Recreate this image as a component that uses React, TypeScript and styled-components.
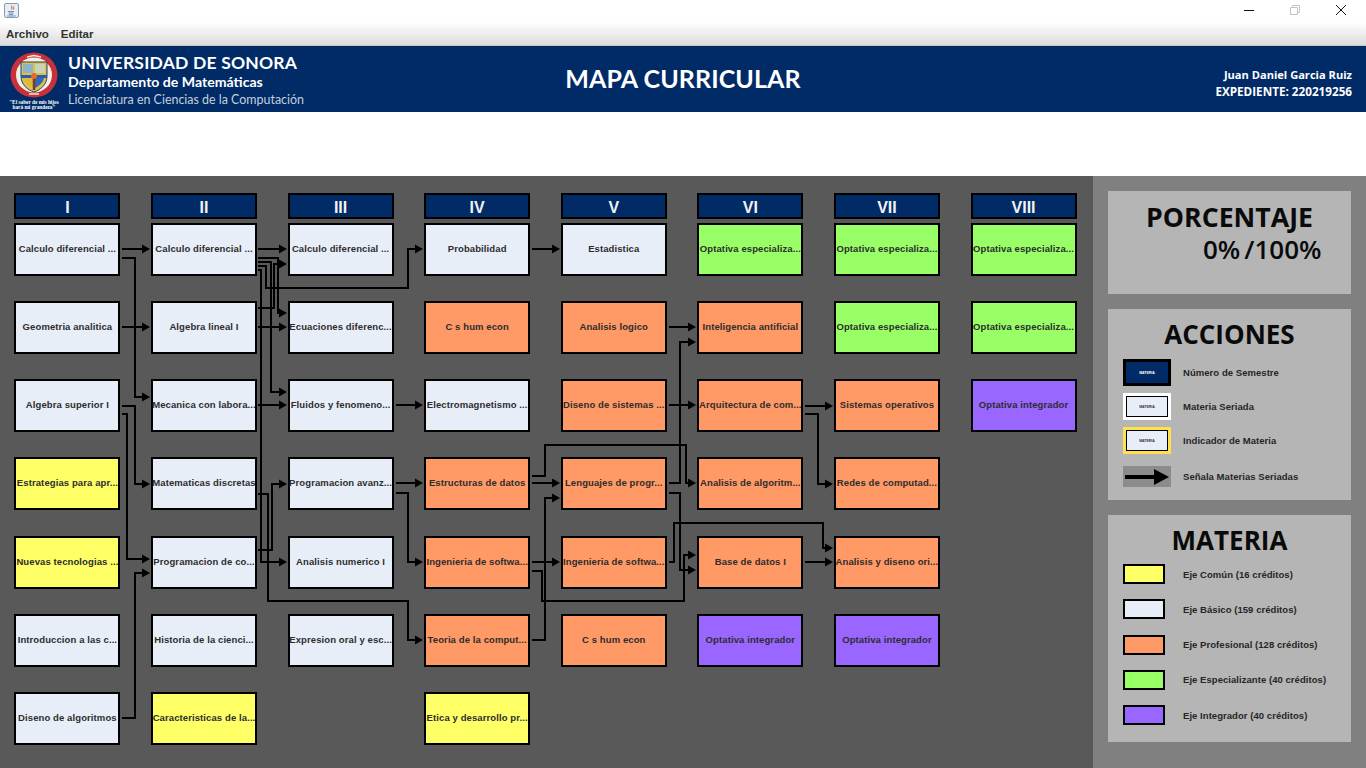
import React from "react";
import styled, { createGlobalStyle } from "styled-components";

type Tone = "basic" | "common" | "pro" | "spec" | "integ";

const toneColors: Record<Tone, string> = {
  basic: "#e8eef8",
  common: "#ffff66",
  pro: "#ff9966",
  spec: "#99ff66",
  integ: "#9966ff",
};

const semesters: { name: string; subjects: [string, Tone][] }[] = [
  {
    name: "I",
    subjects: [
      ["Calculo diferencial ...", "basic"],
      ["Geometria analitica", "basic"],
      ["Algebra superior I", "basic"],
      ["Estrategias para apr...", "common"],
      ["Nuevas tecnologias ...", "common"],
      ["Introduccion a las c...", "basic"],
      ["Diseno de algoritmos", "basic"],
    ],
  },
  {
    name: "II",
    subjects: [
      ["Calculo diferencial ...", "basic"],
      ["Algebra lineal I", "basic"],
      ["Mecanica con labora...", "basic"],
      ["Matematicas discretas", "basic"],
      ["Programacion de co...", "basic"],
      ["Historia de la cienci...", "basic"],
      ["Caracteristicas de la...", "common"],
    ],
  },
  {
    name: "III",
    subjects: [
      ["Calculo diferencial ...", "basic"],
      ["Ecuaciones diferenc...", "basic"],
      ["Fluidos y fenomeno...", "basic"],
      ["Programacion avanz...", "basic"],
      ["Analisis numerico I", "basic"],
      ["Expresion oral y esc...", "basic"],
    ],
  },
  {
    name: "IV",
    subjects: [
      ["Probabilidad", "basic"],
      ["C s hum econ", "pro"],
      ["Electromagnetismo ...", "basic"],
      ["Estructuras de datos", "pro"],
      ["Ingenieria de softwa...", "pro"],
      ["Teoria de la comput...", "pro"],
      ["Etica y desarrollo pr...", "common"],
    ],
  },
  {
    name: "V",
    subjects: [
      ["Estadistica", "basic"],
      ["Analisis logico", "pro"],
      ["Diseno de sistemas ...", "pro"],
      ["Lenguajes de progr...", "pro"],
      ["Ingenieria de softwa...", "pro"],
      ["C s hum econ", "pro"],
    ],
  },
  {
    name: "VI",
    subjects: [
      ["Optativa especializa...", "spec"],
      ["Inteligencia antificial", "pro"],
      ["Arquitectura de com...", "pro"],
      ["Analisis de algoritm...", "pro"],
      ["Base de datos I", "pro"],
      ["Optativa integrador", "integ"],
    ],
  },
  {
    name: "VII",
    subjects: [
      ["Optativa especializa...", "spec"],
      ["Optativa especializa...", "spec"],
      ["Sistemas operativos", "pro"],
      ["Redes de computad...", "pro"],
      ["Analisis y diseno ori...", "pro"],
      ["Optativa integrador", "integ"],
    ],
  },
  {
    name: "VIII",
    subjects: [
      ["Optativa especializa...", "spec"],
      ["Optativa especializa...", "spec"],
      ["Optativa integrador", "integ"],
    ],
  },
];

// polylines in page coordinates, the last point is the arrow tip
const links: number[][] = [
  [122, 249, 150, 249],
  [122, 258, 135, 258, 135, 397, 150, 397],
  [122, 327, 150, 327],
  [122, 406, 135, 406, 135, 484, 150, 484],
  [122, 414, 127, 414, 127, 559, 150, 559],
  [122, 718, 135, 718, 135, 573, 150, 573],
  [258, 249, 287, 249],
  [258, 258, 278, 258, 278, 313, 287, 313],
  [258, 262, 271, 262, 271, 392, 287, 392],
  [258, 266, 266, 266, 266, 288, 408, 288, 408, 249, 423, 249],
  [258, 270, 261, 270, 261, 562, 287, 562],
  [258, 308, 274, 308, 274, 264, 287, 264],
  [258, 327, 287, 327],
  [258, 405, 287, 405],
  [258, 494, 268, 494, 268, 601, 408, 601, 408, 640, 423, 640],
  [258, 550, 272, 550, 272, 484, 287, 484],
  [396, 405, 423, 405],
  [396, 483, 423, 483],
  [396, 493, 408, 493, 408, 562, 423, 562],
  [532, 249, 560, 249],
  [532, 476, 545, 476, 545, 445, 686, 445, 686, 483, 696, 483],
  [532, 483, 560, 483],
  [532, 562, 560, 562],
  [532, 571, 542, 571, 542, 601, 684, 601, 684, 555, 696, 555],
  [532, 640, 545, 640, 545, 498, 560, 498],
  [669, 327, 696, 327],
  [669, 405, 696, 405],
  [669, 483, 680, 483, 680, 342, 696, 342],
  [669, 493, 680, 493, 680, 570, 696, 570],
  [669, 562, 674, 562, 674, 523, 823, 523, 823, 548, 833, 548],
  [805, 406, 833, 406],
  [805, 414, 818, 414, 818, 484, 833, 484],
  [805, 562, 833, 562],
];

const boardTop = 176;

const GlobalStyle = createGlobalStyle`
  html, body {
    margin: 0;
    padding: 0;
    background: #fff;
  }
`;

const Frame = styled.div`
  width: 1366px;
  height: 768px;
  display: flex;
  flex-direction: column;
  overflow: hidden;
  font-family: "Liberation Sans", Arial, sans-serif;
`;

const TitleBar = styled.div`
  height: 22px;
  flex-shrink: 0;
  background: #fff;
  display: flex;
  justify-content: space-between;
  padding: 3px 0 0 4px;
  box-sizing: border-box;
`;

const WindowButtons = styled.div`
  display: flex;
  margin-top: 2px;
  padding-right: 20px;
  gap: 36px;
`;

const MenuBar = styled.div`
  height: 24px;
  flex-shrink: 0;
  box-sizing: border-box;
  display: flex;
  align-items: center;
  gap: 12px;
  padding: 0 0 0 6px;
  background: linear-gradient(#ffffff, #dcdcdc);
  border-bottom: 1px solid #c8c8c8;
`;

const MenuItem = styled.span`
  font-size: 11.5px;
  font-weight: 700;
  color: #333;
  padding-top: 1px;
`;

const Banner = styled.header`
  height: 66px;
  flex-shrink: 0;
  background: #002b66;
  display: grid;
  grid-template-columns: 1fr auto 1fr;
  align-items: center;
  color: #fff;
`;

const Brand = styled.div`
  display: flex;
  gap: 7px;
  padding-left: 7px;
  height: 100%;
`;

const Crest = styled.div`
  width: 54px;
  display: flex;
  flex-direction: column;
  align-items: center;
  padding-top: 6px;
  box-sizing: border-box;
`;

const Motto = styled.div`
  font-family: "Liberation Serif", serif;
  font-size: 5.3px;
  line-height: 5.2px;
  font-weight: 700;
  text-align: center;
  white-space: nowrap;
  margin-top: 2px;
`;

const BrandText = styled.div`
  display: flex;
  flex-direction: column;
  padding-top: 7px;
  font-family: Lato, sans-serif;
  white-space: nowrap;
`;

const University = styled.div`
  font-size: 17.5px;
  line-height: 20px;
  font-weight: 700;
  letter-spacing: 0.2px;
`;

const Department = styled.div`
  font-size: 14.1px;
  line-height: 18px;
  font-weight: 700;
`;

const Degree = styled.div`
  font-size: 12.45px;
  line-height: 18px;
  color: #c4cfdd;
`;

const PageTitle = styled.h1`
  margin: -2px 0 0;
  font-family: Lato, sans-serif;
  font-size: 25px;
  font-weight: 700;
  letter-spacing: 0.1px;
`;

const Student = styled.div`
  text-align: right;
  padding: 7px 14px 0 0;
  font-family: "Open Sans", sans-serif;
  line-height: 17px;
  font-weight: 700;
`;

const StudentLine = styled.div<{ $size: number }>`
  font-size: ${(p) => p.$size}px;
`;

const WhiteGap = styled.div`
  height: 64px;
  flex-shrink: 0;
  background: #fff;
`;

const Main = styled.main`
  flex: 1;
  display: flex;
  min-height: 0;
`;

const Board = styled.section`
  position: relative;
  width: 1093px;
  flex-shrink: 0;
  box-sizing: border-box;
  background: #595959;
  padding: 17px 0 0 14.4px;
  display: flex;
  column-gap: 30.6px;
`;

const Semester = styled.div`
  width: 106px;
  display: flex;
  flex-direction: column;
  row-gap: 25.17px;
`;

const SemesterHead = styled.div`
  height: 26px;
  box-sizing: border-box;
  margin-bottom: -21.17px;
  padding-top: 3px;
  background: #002b66;
  border: 2px solid #000;
  color: #f2f2f2;
  font-size: 16px;
  font-weight: 700;
  display: flex;
  align-items: center;
  justify-content: center;
`;

const Card = styled.div<{ $tone: Tone }>`
  height: 53px;
  box-sizing: border-box;
  padding-bottom: 2px;
  background: ${(p) => toneColors[p.$tone]};
  border: 2px solid #000;
  color: #2d2d2d;
  font-size: 9.5px;
  font-weight: 700;
  letter-spacing: 0.1px;
  white-space: nowrap;
  display: flex;
  align-items: center;
  justify-content: center;
`;

const LinkLayer = styled.svg`
  position: absolute;
  left: 0;
  top: 0;
  width: 1093px;
  height: 592px;
  pointer-events: none;
`;

const Sidebar = styled.aside`
  flex: 1;
  background: #808080;
  padding: 15px 15px 0;
  display: flex;
  flex-direction: column;
  gap: 15px;
`;

const Panel = styled.div<{ $height: number }>`
  height: ${(p) => p.$height}px;
  box-sizing: border-box;
  background: #b5b5b5;
  color: #0a0a0a;
`;

const PanelTitle = styled.div<{ $top: number; $size: number }>`
  font-family: "Open Sans", sans-serif;
  font-size: ${(p) => p.$size}px;
  line-height: 32px;
  font-weight: 700;
  text-align: center;
  padding-top: ${(p) => p.$top}px;
`;

const Score = styled.div`
  font-family: "Open Sans", sans-serif;
  font-size: 26px;
  line-height: 32px;
  font-weight: 600;
  display: flex;
  gap: 4px;
  padding-left: 95px;
`;

const Legend = styled.div<{ $gap: number; $top: number }>`
  display: flex;
  flex-direction: column;
  gap: ${(p) => p.$gap}px;
  padding: ${(p) => p.$top}px 0 0 15px;
`;

const LegendRow = styled.div`
  display: flex;
  align-items: center;
`;

const ArrowRow = styled(LegendRow)`
  margin-top: 5px;
`;

const LegendLabel = styled.span`
  font-size: 9.5px;
  font-weight: 700;
  letter-spacing: 0.05px;
  color: #262626;
  white-space: nowrap;
`;

const SwatchSlot = styled.div`
  width: 60px;
  flex-shrink: 0;
`;

const SampleOuter = styled.div<{ $ring: string; $pad: number }>`
  width: 48px;
  height: 27px;
  box-sizing: border-box;
  background: ${(p) => p.$ring};
  padding: ${(p) => p.$pad}px;
  display: flex;
`;

const SampleInner = styled.div<{ $fill: string; $ink: string }>`
  flex: 1;
  box-sizing: border-box;
  border: 1px solid #000;
  background: ${(p) => p.$fill};
  color: ${(p) => p.$ink};
  font-size: 3.5px;
  font-weight: 700;
  display: flex;
  align-items: center;
  justify-content: center;
`;

const ArrowSample = styled.div`
  width: 48px;
  height: 21px;
  background: #8c8c8c;
  display: flex;
  align-items: center;
  justify-content: center;
`;

const ToneSwatch = styled.div<{ $tone: Tone }>`
  width: 42px;
  height: 20px;
  box-sizing: border-box;
  border: 2px solid #000;
  background: ${(p) => toneColors[p.$tone]};
`;

const JavaIcon = () => (
  <svg width="15" height="15" viewBox="0 0 15 15">
    <rect x="0.5" y="0.5" width="14" height="14" rx="1.5" fill="#e6edf5" stroke="#7f9db9" />
    <path d="M8 2.5C6.5 4 9 4.8 7.6 6.5M9.8 3.5C8.6 4.5 10.4 5 9.4 6.5" fill="none" stroke="#d9541e" strokeWidth="1" />
    <path d="M4 8.5h6M4.500 10h5M5 11.500h4" stroke="#6f93bb" strokeWidth="1" />
    <path d="M3 13h8.500" stroke="#6f93bb" strokeWidth="1" />
  </svg>
);

const WindowIcon = ({ kind }: { kind: "min" | "max" | "close" }) => (
  <svg width="10" height="10" viewBox="0 0 10 10">
    {kind === "min" && <path d="M0 5.500h10" stroke="#111" strokeWidth="1" />}
    {kind === "max" && (
      <path d="M2.500 2.500V.5h7v7h-2M.5 2.500h7v7h-7z" fill="none" stroke="#c4c4c4" strokeWidth="1" />
    )}
    {kind === "close" && <path d="M0 0l10 10M10 0L0 10" stroke="#111" strokeWidth="1" />}
  </svg>
);

const CrestIcon = () => (
  <svg width="48" height="46" viewBox="0 0 48 46">
    <ellipse cx="24" cy="23" rx="23.500" ry="22.500" fill="#c8313a" />
    <ellipse cx="24" cy="23" rx="18" ry="17.500" fill="#f2efe4" />
    <path d="M11 10h26v14c0 9-7 14-13 16-6-2-13-7-13-16z" fill="#d9c24c" stroke="#2a3a6a" />
    <path d="M13 12h10v9H13z" fill="#8fb3c9" />
    <path d="M25 12h10v9H25z" fill="#c9d3b5" />
    <path d="M11 23h26v3H11z" fill="#2b5da8" />
    <path d="M14 26h9v10c-4-2-8-5-9-10z" fill="#e0b93a" />
    <path d="M25 26h9c-1 5-5 8-9 10z" fill="#2f6bb5" />
    <path d="M24 24v14" stroke="#7a3b2a" strokeWidth="2.500" />
    <circle cx="24" cy="24" r="3" fill="#e46a2a" />
    <path d="M17 5l7-1.500L31 5" fill="none" stroke="#f5e9c9" strokeWidth="1.500" />
    <path d="M19 42h10" stroke="#f5e9c9" strokeWidth="1.500" />
  </svg>
);

const LinkLine = ({ points }: { points: number[] }) => {
  const coords = points.map((v, i) => (i % 2 === 1 ? v - boardTop : v));
  const n = coords.length;
  const tipX = coords[n - 2];
  const tipY = coords[n - 1];
  // the shaft stops short so the tip stays sharp
  const shaft = coords.slice(0, n - 2).concat(tipX - 6, tipY);
  let d = "";
  for (let i = 0; i < shaft.length; i += 2) {
    d += `${i === 0 ? "M" : "L"}${shaft[i]} ${shaft[i + 1]}`;
  }
  return (
    <>
      <path d={d} fill="none" stroke="#000" strokeWidth="2" />
      <path d={`M${tipX} ${tipY}L${tipX - 8} ${tipY - 4.500}V${tipY + 4.500}Z`} fill="#000" />
    </>
  );
};

export default function App() {
  return (
    <Frame>
      <GlobalStyle />
      <TitleBar>
        <JavaIcon />
        <WindowButtons>
          <WindowIcon kind="min" />
          <WindowIcon kind="max" />
          <WindowIcon kind="close" />
        </WindowButtons>
      </TitleBar>
      <MenuBar>
        <MenuItem>Archivo</MenuItem>
        <MenuItem>Editar</MenuItem>
      </MenuBar>
      <Banner>
        <Brand>
          <Crest>
            <CrestIcon />
            <Motto>
              "El saber de mis hijos
              <br />
              hará mi grandeza"
            </Motto>
          </Crest>
          <BrandText>
            <University>UNIVERSIDAD DE SONORA</University>
            <Department>Departamento de Matemáticas</Department>
            <Degree>Licenciatura en Ciencias de la Computación</Degree>
          </BrandText>
        </Brand>
        <PageTitle>MAPA CURRICULAR</PageTitle>
        <Student>
          <StudentLine $size={11.1}>Juan Daniel Garcia Ruiz</StudentLine>
          <StudentLine $size={11.7}>EXPEDIENTE: 220219256</StudentLine>
        </Student>
      </Banner>
      <WhiteGap />
      <Main>
        <Board>
          {semesters.map((s) => (
            <Semester key={s.name}>
              <SemesterHead>{s.name}</SemesterHead>
              {s.subjects.map(([label, tone], i) => (
                <Card key={i} $tone={tone}>
                  {label}
                </Card>
              ))}
            </Semester>
          ))}
          <LinkLayer viewBox="0 0 1093 592">
            {links.map((points, i) => (
              <LinkLine key={i} points={points} />
            ))}
          </LinkLayer>
        </Board>
        <Sidebar>
          <Panel $height={103}>
            <PanelTitle $top={10} $size={26.7}>PORCENTAJE</PanelTitle>
            <Score>
              <span>0%</span>
              <span>/100%</span>
            </Score>
          </Panel>
          <Panel $height={191}>
            <PanelTitle $top={9} $size={26}>ACCIONES</PanelTitle>
            <Legend $gap={7} $top={9}>
              <LegendRow>
                <SwatchSlot>
                  <SampleOuter $ring="#000" $pad={2}>
                    <SampleInner $fill="#002b66" $ink="#fff">MATERIA</SampleInner>
                  </SampleOuter>
                </SwatchSlot>
                <LegendLabel>Número de Semestre</LegendLabel>
              </LegendRow>
              <LegendRow>
                <SwatchSlot>
                  <SampleOuter $ring="#fff" $pad={3}>
                    <SampleInner $fill="#e8eef8" $ink="#333">MATERIA</SampleInner>
                  </SampleOuter>
                </SwatchSlot>
                <LegendLabel>Materia Seriada</LegendLabel>
              </LegendRow>
              <LegendRow>
                <SwatchSlot>
                  <SampleOuter $ring="#ffe14d" $pad={3}>
                    <SampleInner $fill="#e8eef8" $ink="#333">MATERIA</SampleInner>
                  </SampleOuter>
                </SwatchSlot>
                <LegendLabel>Indicador de Materia</LegendLabel>
              </LegendRow>
              <ArrowRow>
                <SwatchSlot>
                  <ArrowSample>
                    <svg width="44" height="16" viewBox="0 0 44 16">
                      <path d="M0 8h30" stroke="#000" strokeWidth="4" />
                      <path d="M44 8L29 0v16z" fill="#000" />
                    </svg>
                  </ArrowSample>
                </SwatchSlot>
                <LegendLabel>Señala Materias Seriadas</LegendLabel>
              </ArrowRow>
            </Legend>
          </Panel>
          <Panel $height={227}>
            <PanelTitle $top={9} $size={26}>MATERIA</PanelTitle>
            <Legend $gap={15.3} $top={8}>
              <LegendRow>
                <SwatchSlot><ToneSwatch $tone="common" /></SwatchSlot>
                <LegendLabel>Eje Común (16 créditos)</LegendLabel>
              </LegendRow>
              <LegendRow>
                <SwatchSlot><ToneSwatch $tone="basic" /></SwatchSlot>
                <LegendLabel>Eje Básico (159 créditos)</LegendLabel>
              </LegendRow>
              <LegendRow>
                <SwatchSlot><ToneSwatch $tone="pro" /></SwatchSlot>
                <LegendLabel>Eje Profesional (128 créditos)</LegendLabel>
              </LegendRow>
              <LegendRow>
                <SwatchSlot><ToneSwatch $tone="spec" /></SwatchSlot>
                <LegendLabel>Eje Especializante (40 créditos)</LegendLabel>
              </LegendRow>
              <LegendRow>
                <SwatchSlot><ToneSwatch $tone="integ" /></SwatchSlot>
                <LegendLabel>Eje Integrador (40 créditos)</LegendLabel>
              </LegendRow>
            </Legend>
          </Panel>
        </Sidebar>
      </Main>
    </Frame>
  );
}
